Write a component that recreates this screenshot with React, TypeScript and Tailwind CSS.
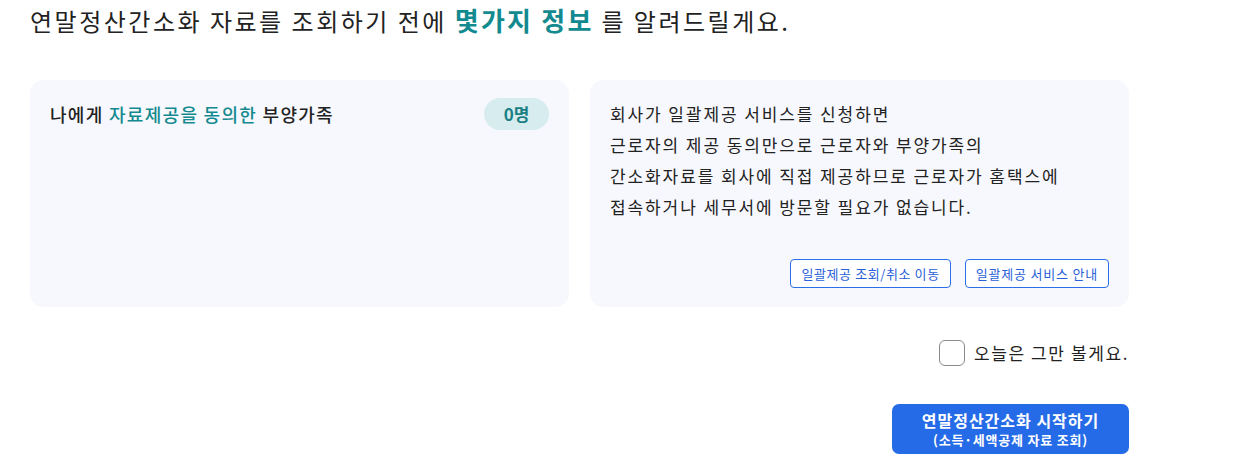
import React from "react";

const font = { fontFamily: '"Noto Sans CJK KR", "Noto Sans", sans-serif' };

export default function App() {
  return (
    <div style={font} className="w-[1243px] h-[462px] bg-white text-[#222]">
      <div className="w-[1099px] pl-[30px] box-content">
        <h1 className="pt-[2px] h-[40px] text-[24px] leading-[36px] text-[#222] tracking-[2.5px] whitespace-nowrap">
          연말정산간소화 자료를 조회하기 전에{" "}
          <b className="text-[26px] font-bold text-[#138a8f] tracking-[2.2px]">몇가지 정보</b>{" "}
          를 알려드릴게요.
        </h1>

        <div className="mt-[40px] flex gap-[21px]">
          <section className="w-[539px] h-[227px] rounded-[14px] bg-[#f7f8fd] px-[20px] pt-[18px]">
            <div className="flex items-center justify-between">
              <h2 className="text-[18px] font-medium leading-[32px] tracking-[1.3px]">
                나에게 <span className="text-[#138a8f]">자료제공을 동의한</span> 부양가족
              </h2>
              <span className="h-[32px] w-[65px] rounded-full bg-[#d6ecee] text-center text-[17px] font-bold leading-[32px] text-[#1b7f84]">
                0명
              </span>
            </div>
          </section>

          <section className="w-[539px] h-[227px] rounded-[14px] bg-[#f7f8fd] px-[20px] pt-[18px] pb-[19px] flex flex-col">
            <p className="text-[17px] leading-[31px] text-[#222] tracking-[1.9px] whitespace-nowrap">
              회사가 일괄제공 서비스를 신청하면
              <br />
              근로자의 제공 동의만으로 근로자와 부양가족의
              <br />
              간소화자료를 회사에 직접 제공하므로 근로자가 홈택스에
              <br />
              접속하거나 세무서에 방문할 필요가 없습니다.
            </p>
            <div className="mt-auto flex justify-end gap-[14px]">
              <button className="h-[29px] rounded-[4px] border border-[#2a6ee8] bg-white px-[10px] text-[13px] tracking-[0.6px] text-[#2a5fd8]">
                일괄제공 조회/취소 이동
              </button>
              <button className="h-[29px] rounded-[4px] border border-[#2a6ee8] bg-white px-[10px] text-[13px] tracking-[0.8px] text-[#2a5fd8]">
                일괄제공 서비스 안내
              </button>
            </div>
          </section>
        </div>

        <div className="mt-[33px] flex justify-end items-center">
          <label className="flex items-center gap-[9px]">
            <span className="h-[26px] w-[26px] rounded-[6px] border border-[#8a8a8a] bg-white" />
            <span className="text-[17px] leading-[26px] tracking-[1.6px] text-[#222]">오늘은 그만 볼게요.</span>
          </label>
        </div>

        <div className="mt-[38px] flex justify-end">
          <button className="h-[50px] w-[237px] rounded-[7px] bg-[#256be8] text-white flex flex-col items-center justify-center gap-[3px]">
            <span className="text-[16px] font-bold leading-[18px] tracking-[1px]">연말정산간소화 시작하기</span>
            <span className="text-[13px] font-bold leading-[15px] tracking-[0.8px]">(소득·세액공제 자료 조회)</span>
          </button>
        </div>
      </div>
    </div>
  );
}
